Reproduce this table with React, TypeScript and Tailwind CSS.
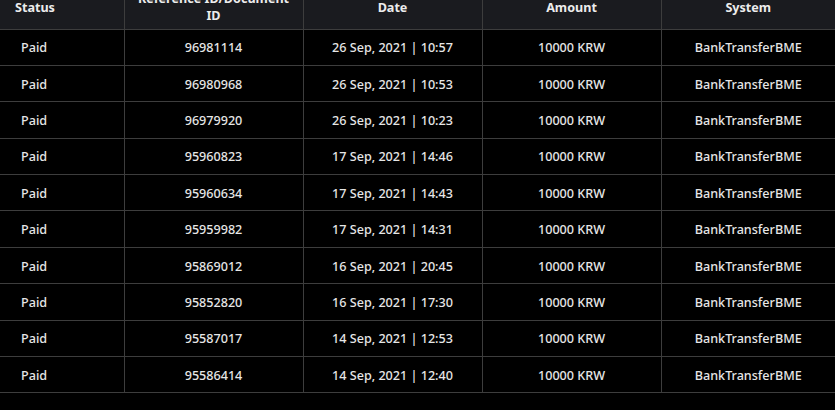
import React from "react";

const rows = [
  ["96981114", "26 Sep, 2021 | 10:57"],
  ["96980968", "26 Sep, 2021 | 10:53"],
  ["96979920", "26 Sep, 2021 | 10:23"],
  ["95960823", "17 Sep, 2021 | 14:46"],
  ["95960634", "17 Sep, 2021 | 14:43"],
  ["95959982", "17 Sep, 2021 | 14:31"],
  ["95869012", "16 Sep, 2021 | 20:45"],
  ["95852820", "16 Sep, 2021 | 17:30"],
  ["95587017", "14 Sep, 2021 | 12:53"],
  ["95586414", "14 Sep, 2021 | 12:40"],
];

export default function App() {
  return (
    <div
      className="w-[835px] h-[410px] overflow-hidden bg-black text-[12.6px] text-[#e6e6e6]"
      style={{ fontFamily: '"Noto Sans", "Open Sans", sans-serif' }}
    >
      <table className="-mt-[15px] w-[835px] table-fixed border-collapse">
        <colgroup>
          <col className="w-[124px]" />
          <col className="w-[179px]" />
          <col className="w-[179px]" />
          <col className="w-[179px]" />
          <col className="w-[174px]" />
        </colgroup>
        <thead>
          <tr className="h-[44px] bg-[#1a1b1f] font-bold text-[#ececec] leading-[17px]">
            <th className="border-b border-r border-[#3d3d3d] pl-[15px] pt-[2px] text-left font-bold">Status</th>
            <th className="border-b border-r border-[#3d3d3d] px-2 text-center font-bold">
              Reference ID/Document
              <br />
              ID
            </th>
            <th className="border-b border-r border-[#3d3d3d] pt-[2px] text-center font-bold">Date</th>
            <th className="border-b border-r border-[#3d3d3d] pt-[2px] text-center font-bold">Amount</th>
            <th className="border-b border-[#3d3d3d] pt-[2px] text-center font-bold">System</th>
          </tr>
        </thead>
        <tbody>
          {rows.map(([id, date]) => (
            <tr key={id} className="h-[36.4px] font-medium">
              <td className="border-b border-r border-[#3d3d3d] pl-[21px] pt-[3px] text-left">Paid</td>
              <td className="border-b border-r border-[#3d3d3d] pt-[3px] text-center">{id}</td>
              <td className="border-b border-r border-[#3d3d3d] pt-[3px] text-center">{date}</td>
              <td className="border-b border-r border-[#3d3d3d] pt-[3px] text-center">10000 KRW</td>
              <td className="border-b border-[#3d3d3d] pt-[3px] text-center">BankTransferBME</td>
            </tr>
          ))}
        </tbody>
      </table>
    </div>
  );
}
